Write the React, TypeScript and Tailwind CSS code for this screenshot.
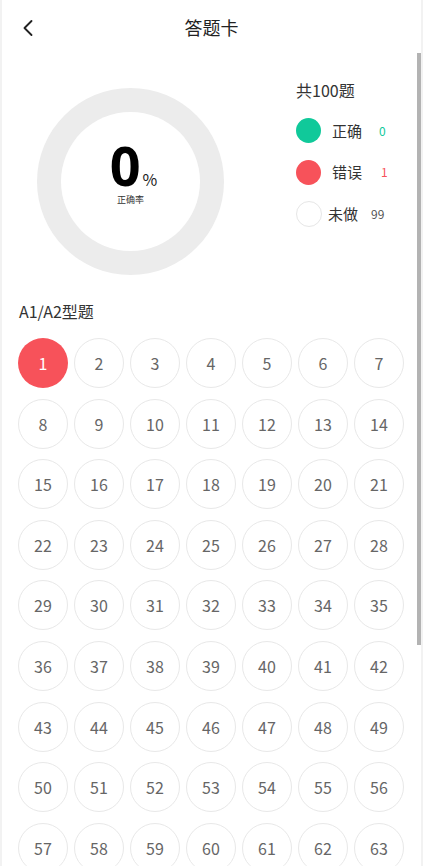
import { ChevronLeft } from 'lucide-react'

const TOTAL = 63

function Legend({ color, label, count, countClass, hollow }: { color: string; label: string; count: number; countClass: string; hollow?: boolean }) {
    return (
        <div className="flex h-[41.5px] items-center">
            <div
                className={hollow ? 'h-[26px] w-[26px] rounded-full border border-[#e6e6e6] bg-white' : 'h-[25px] w-[25px] rounded-full'}
                style={hollow ? undefined : { backgroundColor: color }}
            />
            <span className={hollow ? 'ml-[6px] text-[15px] text-[#333]' : 'ml-[11px] text-[15px] text-[#333]'}>{label}</span>
            <span className={countClass}>{count}</span>
        </div>
    )
}

export default function App() {
    const nums = Array.from({ length: TOTAL }, (_, i) => i + 1)

    return (
        <div className="relative h-[866px] overflow-hidden bg-[#f2f2f2] px-[2px] font-['Noto_Sans_CJK_SC',sans-serif]">
            <div className="h-full bg-white">
                <div className="relative flex h-[55px] items-center justify-center">
                    <ChevronLeft className="absolute left-[12px] top-[14px] text-[#222]" size={28} strokeWidth={1.6} />
                    <span className="text-[18px] text-[#222]">答题卡</span>
                </div>

                <div className="flex pt-[33px]">
                    <div className="ml-[35px] flex h-[187px] w-[187px] items-center justify-center rounded-full bg-[#ececec]">
                        <div className="flex h-[139px] w-[139px] flex-col items-center justify-center rounded-full bg-white pb-[15px]">
                            <div className="flex items-baseline pl-[6px]">
                                <span className="font-['Noto_Sans',sans-serif] text-[54px] font-bold leading-[46px] text-black">0</span>
                                <span className="ml-[2px] text-[16px] leading-none text-[#222]">%</span>
                            </div>
                            <span className="mt-[6px] text-[9px] leading-[12px] text-[#333]">正确率</span>
                        </div>
                    </div>

                    <div className="ml-[72px] flex flex-col">
                        <span className="mt-[-9px] text-[16px] leading-[22px] text-[#333]">共100题</span>
                        <div className="mt-[9px]">
                            <Legend color="#10c99a" label="正确" count={0} countClass="ml-[17px] text-[12px] text-[#10c99a]" />
                            <Legend color="#f7525a" label="错误" count={1} countClass="ml-[19px] text-[12px] text-[#f7525a]" />
                            <Legend color="#fff" label="未做" count={99} countClass="ml-[13px] text-[12px] text-[#555]" hollow />
                        </div>
                    </div>
                </div>

                <div className="mt-[25px] px-[17px] text-[16px] leading-[22px] text-[#333]">A1/A2型题</div>

                <div className="mt-[16px] grid grid-cols-[repeat(7,50px)] gap-x-[6px] gap-y-[10.6px] pl-[16px]">
                    {nums.map((n) =>
                        n === 1 ? (
                            <div key={n} className="flex h-[50px] w-[50px] items-center justify-center rounded-full bg-[#f7525a] text-[16px] text-white">
                                {n}
                            </div>
                        ) : (
                            <div key={n} className="flex h-[50px] w-[50px] items-center justify-center rounded-full border border-[#e8e8e8] text-[16px] text-[#666]">
                                {n}
                            </div>
                        )
                    )}
                </div>
            </div>

            <div className="absolute right-[2px] top-[53px] h-[592px] w-[4px] bg-[#b3b3b3]" />
        </div>
    )
}
